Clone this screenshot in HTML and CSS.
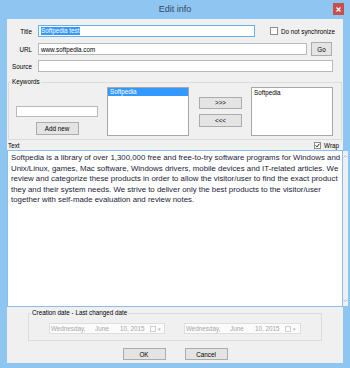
FILE: index.html
```html
<!DOCTYPE html>
<html lang="en">
<head>
    <meta charset="UTF-8">
    <title>Edit info</title>
    <link rel="stylesheet" href="styles.css">
</head>
<body>
    <div class="window">
        <div class="titlebar">
            <span></span>
            <span class="title">Edit info</span>
            <span class="close-btn">
                <svg width="5" height="5" viewBox="0 0 5 5"><path d="M0.5 0.5 L4.5 4.5 M4.5 0.5 L0.5 4.5" stroke="#fff" stroke-width="1.1"/></svg>
            </span>
        </div>
        <div class="client">
            <div class="field-row">
                <span class="lbl">Title</span>
                <div class="input w-title focused"><span class="sel">Softpedia test</span></div>
                <span class="check"><span class="box"></span>Do not synchronize</span>
            </div>
            <div class="field-row row-url">
                <span class="lbl">URL</span>
                <div class="input w-url">www.softpedia.com</div>
                <span class="btn btn-go">Go</span>
            </div>
            <div class="field-row row-source">
                <span class="lbl">Source</span>
                <div class="input w-source"></div>
            </div>

            <fieldset class="group kw-group">
                <legend>Keywords</legend>
                <div class="kw-body">
                    <div class="kw-left">
                        <div class="input kw-input"></div>
                        <span class="btn btn-add">Add new</span>
                    </div>
                    <div class="list">
                        <div class="list-item selected">Softpedia</div>
                    </div>
                    <div class="kw-mid">
                        <span class="btn">&gt;&gt;&gt;</span>
                        <span class="btn btn-back">&lt;&lt;&lt;</span>
                    </div>
                    <div class="list list-right">
                        <div class="list-item">Softpedia</div>
                    </div>
                </div>
            </fieldset>

            <div class="text-row">
                <span class="text-lbl">Text</span>
                <span class="check">
                    <span class="box box-small">
                        <svg width="5" height="5" viewBox="0 0 5 5"><path d="M0.6 2.4 L2 3.9 L4.4 0.8" fill="none" stroke="#222" stroke-width="1"/></svg>
                    </span>Wrap
                </span>
            </div>
            <div class="textarea">
                <div class="text-content">
                    Softpedia is a library of over 1,300,000 free and free-to-try software programs for Windows and<br>
                    Unix/Linux, games, Mac software, Windows drivers, mobile devices and IT-related articles. We<br>
                    review and categorize these products in order to allow the visitor/user to find the exact product<br>
                    they and their system needs. We strive to deliver only the best products to the visitor/user<br>
                    together with self-made evaluation and review notes.
                </div>
                <div class="scrollbar">
                    <svg width="5" height="3" viewBox="0 0 5 3"><path d="M0.5 2.5 L2.5 0.5 L4.5 2.5" fill="none" stroke="#b4b4b4" stroke-width="0.8"/></svg>
                    <svg width="5" height="3" viewBox="0 0 5 3"><path d="M0.5 0.5 L2.5 2.5 L4.5 0.5" fill="none" stroke="#b4b4b4" stroke-width="0.8"/></svg>
                </div>
            </div>

            <fieldset class="group date-group">
                <legend>Creation date - Last changed date</legend>
                <div class="date-body">
                    <div class="date-picker">
                        <span class="d-day">Wednesday,</span>
                        <span class="d-month">June</span>
                        <span class="d-year">10, 2015</span>
                        <span class="d-cal"></span>
                        <span class="d-arrow">&#9662;</span>
                    </div>
                    <div class="date-picker picker-wide">
                        <span class="d-day">Wednesday,</span>
                        <span class="d-month">June</span>
                        <span class="d-year">10, 2015</span>
                        <span class="d-cal"></span>
                        <span class="d-arrow">&#9662;</span>
                    </div>
                </div>
            </fieldset>

            <div class="actions">
                <span class="btn">OK</span>
                <span class="btn">Cancel</span>
            </div>
        </div>
    </div>
</body>
</html>
```

FILE: styles.css
```css
* {
    box-sizing: border-box;
}
body {
    margin: 0;
    font-family: 'Liberation Sans', Arial, sans-serif;
    font-size: 6.3px;
    color: #000;
}
.window {
    width: 350px;
    height: 368px;
    background-color: #8ec5f1;
    display: flex;
    flex-direction: column;
}
.titlebar {
    height: 19px;
    display: grid;
    grid-template-columns: 1fr auto 1fr;
}
.title {
    font-size: 9px;
    line-height: 19px;
    color: #34495e;
}
.close-btn {
    justify-self: end;
    width: 11px;
    height: 12px;
    margin: 3px 6px 0 0;
    background-color: #c7504f;
    display: flex;
    align-items: center;
    justify-content: center;
}
.client {
    flex: 1;
    margin: 0 7px 5px;
    background-color: #f0f0f0;
    padding-top: 6px;
}

/* top fields */
.field-row {
    display: flex;
    align-items: center;
    height: 12px;
}
.row-url {
    margin-top: 6px;
}
.row-source {
    margin-top: 5px;
}
.lbl {
    width: 25px;
    text-align: right;
    margin-right: 6px;
}
.input {
    height: 12px;
    background-color: #fff;
    border: 1px solid #b9b9b9;
    padding-left: 2px;
    display: flex;
    align-items: center;
    white-space: nowrap;
}
.focused {
    border-color: #6aaee9;
}
.sel {
    background-color: #3399ff;
    color: #fff;
    line-height: 8px;
}
.w-title {
    width: 217px;
}
.w-url {
    width: 269px;
}
.w-source {
    width: 295px;
}
.check {
    display: flex;
    align-items: center;
}
.field-row .check {
    margin-left: 15px;
}
.box {
    width: 8px;
    height: 8px;
    border: 1px solid #8c8c8c;
    background-color: #fff;
    margin-right: 3px;
    display: flex;
    align-items: center;
    justify-content: center;
}
.box-small {
    width: 7px;
    height: 7px;
}
.btn {
    width: 43px;
    height: 12px;
    border: 1px solid #acacac;
    background-color: #e4e4e4;
    display: flex;
    align-items: center;
    justify-content: center;
}
.btn-go {
    width: 21px;
    height: 14px;
    margin-left: 4px;
}

/* group boxes */
.group {
    margin: 0;
    padding: 0;
    border: 1px solid #dcdcdc;
    min-width: 0;
}
.group legend {
    padding: 0 1px;
    margin-left: 2px;
    line-height: 8px;
}
.kw-group {
    margin: 6px 1px 0;
}
.kw-body {
    display: flex;
    padding: 1px 8px 3px 7px;
}
.kw-left {
    width: 82px;
    display: flex;
    flex-direction: column;
    align-items: center;
    padding-top: 19px;
}
.kw-input {
    width: 82px;
    height: 11px;
}
.btn-add {
    height: 13px;
    margin-top: 5px;
}
.list {
    width: 82px;
    height: 49px;
    margin-left: 9px;
    border: 1px solid #a8a8a8;
    background-color: #fff;
}
.list-item {
    height: 8px;
    line-height: 8px;
    padding-left: 2px;
}
.list-right .list-item {
    margin-top: 1px;
}
.selected {
    background-color: #3399ff;
    color: #fff;
}
.kw-mid {
    margin-left: 10px;
    display: flex;
    flex-direction: column;
    justify-content: center;
    gap: 5px;
}
.btn-back {
    height: 13px;
}

/* text */
.text-row {
    display: flex;
    justify-content: space-between;
    align-items: center;
    height: 10px;
    padding: 0 4px 0 1px;
}
.textarea {
    height: 157px;
    border: 1px solid #8cbcea;
    background-color: #fff;
    display: flex;
}
.text-content {
    flex: 1;
    padding: 2px 3px;
    font-size: 7.85px;
    line-height: 10.6px;
    color: #1c1c38;
    white-space: nowrap;
}
.scrollbar {
    width: 10px;
    background-color: #f0f0f0;
    display: flex;
    flex-direction: column;
    justify-content: space-between;
    align-items: center;
    padding: 4px 0;
}

/* dates */
.date-group {
    margin: 2px 21px 0;
}
.date-body {
    display: flex;
    gap: 19px;
    padding: 6px 20px;
}
.date-picker {
    width: 116px;
    height: 11px;
    border: 1px solid #dedede;
    background-color: #fbfbfb;
    color: #a6a6a6;
    display: flex;
    align-items: center;
    padding-left: 1px;
    white-space: nowrap;
}
.picker-wide {
    width: 117px;
}
.d-day {
    width: 44px;
}
.d-month {
    width: 25px;
}
.d-year {
    width: 30px;
}
.d-cal {
    width: 6px;
    height: 6px;
    border: 1px solid #cfcfcf;
    margin-right: 2px;
}
.d-arrow {
    font-size: 5px;
    color: #b5b5b5;
}

.actions {
    display: flex;
    justify-content: center;
    gap: 19px;
    margin-top: 7px;
}
```
